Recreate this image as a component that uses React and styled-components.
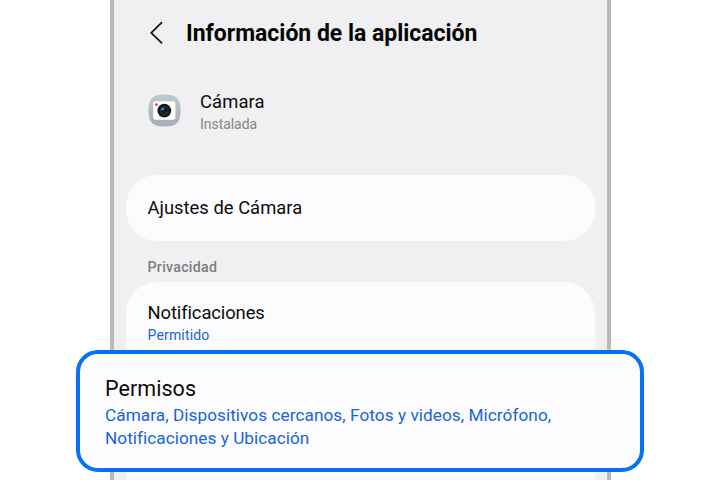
import React from 'react';
import styled, { createGlobalStyle } from 'styled-components';

const GlobalStyle = createGlobalStyle`
    * {
        box-sizing: border-box;
    }

    body {
        margin: 0;
        background-color: #ffffff;
        font-family: Roboto, 'Liberation Sans', sans-serif;
    }
`;

const Page = styled.main`
    position: relative;
    width: 720px;
    height: 480px;
    overflow: hidden;
    padding-left: 110px;
`;

const Phone = styled.div`
    display: flex;
    flex-direction: column;
    width: 501px;
    height: 480px;
    padding: 0 12px;
    border: solid #bababa;
    border-width: 0 4px;
    background-color: #f0f0f2;
`;

const Header = styled.header`
    display: flex;
    align-items: center;
    height: 66px;
    padding-left: 22px;
    gap: 22px;
`;

const BackIcon = styled.svg`
    width: 16px;
    height: 24px;
    flex: none;
`;

const Title = styled.h1`
    margin: 0;
    padding-top: 1px;
    font-size: 23px;
    font-weight: 700;
    line-height: 28px;
    letter-spacing: ${({ $spacing }) => $spacing};
    color: #060606;
    white-space: nowrap;
`;

const AppRow = styled.section`
    display: flex;
    align-items: flex-start;
    height: 90px;
    padding: 24px 0 0 22px;
    gap: 19px;
`;

const CameraIcon = styled.svg`
    width: 33px;
    height: 33px;
    margin-top: 4px;
    flex: none;
`;

const Info = styled.div`
    display: flex;
    flex-direction: column;
`;

const Label = styled.span`
    font-size: 18.4px;
    line-height: 24px;
    letter-spacing: ${({ $spacing }) => $spacing};
    color: #0c0c0c;
    white-space: nowrap;
`;

const Status = styled.span`
    font-size: 14px;
    line-height: 20px;
    letter-spacing: ${({ $spacing }) => $spacing};
    color: ${({ $link }) => ($link ? '#1a64d8' : '#858587')};
    white-space: nowrap;
`;

const Card = styled.section`
    display: flex;
    flex-direction: column;
    justify-content: ${({ $open }) => ($open ? 'flex-start' : 'center')};
    flex: ${({ $open }) => ($open ? '1' : 'none')};
    height: ${({ $open }) => ($open ? 'auto' : '66px')};
    margin-top: ${({ $open }) => ($open ? '0' : '19px')};
    padding: ${({ $open }) => ($open ? '19px 21.5px 0' : '0 21.5px')};
    border-radius: ${({ $open }) => ($open ? '31px 31px 0 0' : '31px')};
    background-color: #fcfcfe;
`;

const SectionTitle = styled.h2`
    margin: 0;
    height: 41px;
    padding: 16px 21.5px 0;
    font-size: 14.2px;
    font-weight: 500;
    line-height: 20px;
    letter-spacing: ${({ $spacing }) => $spacing};
    color: #7c7c7e;
`;

const Highlight = styled.section`
    position: absolute;
    left: 76px;
    top: 350px;
    width: 568px;
    height: 122px;
    padding: 21px 25px 0;
    border: 4px solid #0572f2;
    border-radius: 22px;
    background-color: #fcfcfe;
`;

const HighlightTitle = styled.h2`
    margin: 0;
    font-size: 21.5px;
    font-weight: 400;
    line-height: 28px;
    letter-spacing: ${({ $spacing }) => $spacing};
    color: #0c0c0c;
`;

const Permissions = styled.p`
    display: flex;
    flex-direction: column;
    align-items: flex-start;
    margin: 1px 0 0;
    font-size: 17.2px;
    line-height: 23px;
    color: #1a64d8;
    white-space: nowrap;
`;

const Line = styled.span`
    letter-spacing: ${({ $spacing }) => $spacing};
`;

const Camera = () => (
    <CameraIcon viewBox="0 0 33 33">
        <defs>
            <linearGradient id="shell" x1="0" y1="0" x2="0" y2="1">
                <stop offset="0" stopColor="#bccacd" />
                <stop offset="1" stopColor="#a6adba" />
            </linearGradient>
        </defs>
        <path d="M16.5 .5C28.5 .5 32.5 4.5 32.5 16.5S28.5 32.5 16.5 32.5 .5 28.5 .5 16.5 4.5 .5 16.5 .5Z" fill="url(#shell)" />
        <rect x="5.2" y="7.2" width="22.2" height="18.6" rx="2.4" fill="#ffffff" />
        <circle cx="8.5" cy="10.6" r="1.3" fill="#f0302c" />
        <circle cx="16.3" cy="16.6" r="6.9" fill="#171717" />
        <circle cx="16.3" cy="16.6" r="4.3" fill="#303037" />
        <circle cx="16.3" cy="16.6" r="2.9" fill="#090b16" />
        <path d="M13.2 16.4a3 3 0 0 1 2.8-3l.3 2.1-1.3 1.2Z" fill="#1d94c4" />
        <circle cx="17.3" cy="18.1" r=".9" fill="#3c2c70" />
    </CameraIcon>
);

const App = () => {
    return (
        <Page>
            <GlobalStyle />
            <Phone>
                <Header>
                    <BackIcon viewBox="0 0 16 24" fill="none" stroke="#111111" strokeWidth="1.7" strokeLinecap="round" strokeLinejoin="round">
                        <path d="M13.6 1.7 3.2 11.9l10.4 10" />
                    </BackIcon>
                    <Title $spacing="-0.02px">Información de la aplicación</Title>
                </Header>
                <AppRow>
                    <Camera />
                    <Info>
                        <Label $spacing="0.12px">Cámara</Label>
                        <Status $spacing="-0.04px">Instalada</Status>
                    </Info>
                </AppRow>
                <Card>
                    <Label $spacing="0.01px">Ajustes de Cámara</Label>
                </Card>
                <SectionTitle $spacing="0.28px">Privacidad</SectionTitle>
                <Card $open>
                    <Label $spacing="-0.1px">Notificaciones</Label>
                    <Status $link $spacing="0.16px">Permitido</Status>
                </Card>
            </Phone>
            <Highlight>
                <HighlightTitle $spacing="0.05px">Permisos</HighlightTitle>
                <Permissions>
                    <Line $spacing="0.06px">Cámara, Dispositivos cercanos, Fotos y videos, Micrófono,</Line>
                    <Line $spacing="0.04px">Notificaciones y Ubicación</Line>
                </Permissions>
            </Highlight>
        </Page>
    );
};

export default App;
